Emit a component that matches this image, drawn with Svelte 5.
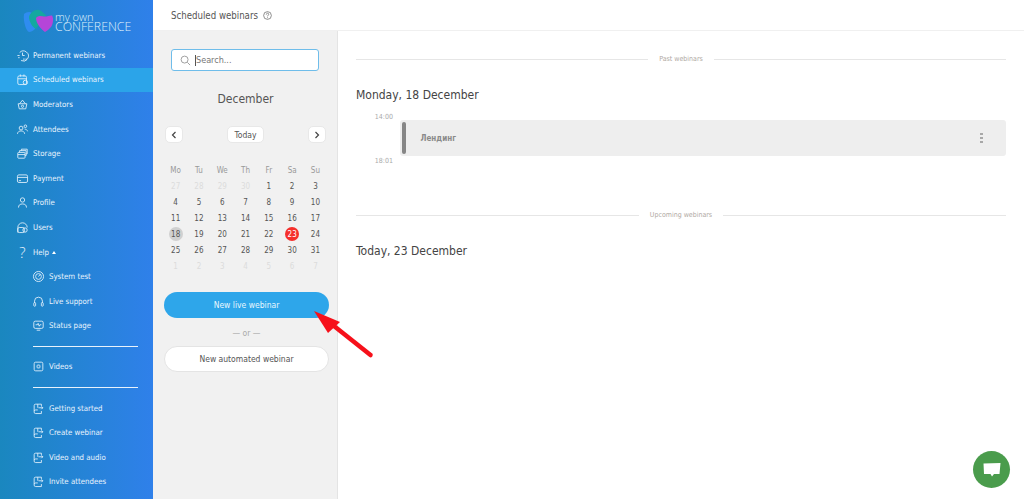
<script>
  const I = {
    perm: `<path d="M5 5a7 7 0 1 1 2 11" /><path d="M9 5v4h3"/><path d="M2 9h3M3 12h2M11 13v3M14 13v3"/>`,
    sched: `<rect x="2.5" y="4" width="12" height="12" rx="2"/><path d="M2.5 8h12M6 2v3M11 2v3"/><circle cx="13" cy="13" r="3"/>`,
    mod: `<path d="M3 8h12l-1.5 7h-9z"/><path d="M5 8l4-5 4 5"/><circle cx="9" cy="11.5" r="1.5"/>`,
    att: `<circle cx="7" cy="7" r="2.6"/><path d="M2 15c.5-3 2.5-4 5-4s4.500 1 5 4"/><circle cx="13" cy="4.500" r="1.800"/><path d="M12 8.500c2 0 3.500 1 4 3"/>`,
    stor: `<rect x="2.500" y="7.500" width="10" height="8" rx="1"/><path d="M5 7V5h9v7h-1.500M7.500 5V3h8v6.500H14M2.500 10.500h10"/>`,
    pay: `<rect x="2" y="4" width="14" height="10.500" rx="2"/><path d="M2 7.500h14M4 12h3"/>`,
    prof: `<circle cx="9" cy="5.500" r="3"/><path d="M3.500 16c0-3.500 2-5 5.500-5s5.500 1.500 5.500 5"/>`,
    users: `<path d="M2.500 16V9a6.500 6.500 0 0 1 13 0"/><rect x="2.500" y="9" width="9" height="7" rx="2"/><circle cx="12.500" cy="12.500" r="3"/>`,
    sys: `<circle cx="9" cy="9" r="7"/><circle cx="9" cy="9" r="4"/><path d="M9 9l2.500-3"/>`,
    live: `<path d="M3.500 11V8.500a5.500 5.500 0 0 1 11 0V11"/><rect x="2.500" y="10.500" width="2.500" height="5" rx="1"/><rect x="13" y="10.500" width="2.500" height="5" rx="1"/>`,
    stat: `<rect x="2.500" y="3" width="13" height="10" rx="2"/><path d="M5 8h2.500l1-2 1.500 4 1-2h2M6.500 15.500h5"/>`,
    vid: `<rect x="3" y="3" width="12" height="12" rx="2"/><rect x="7" y="7" width="4" height="4" rx="1"/>`,
    book: `<path d="M13 5.500V3H5a2 2 0 0 0-2 2v9a2 2 0 0 0 2 2h8v-3.500"/><path d="M3 12.500a2 2 0 0 1 2-1.500h3M8 3v5M9 8h6M13 6l2 2-2 2"/>`
  };
  const top = [
    ['Permanent webinars', 'perm'], ['Scheduled webinars', 'sched', true], ['Moderators', 'mod'],
    ['Attendees', 'att'], ['Storage', 'stor'], ['Payment', 'pay'], ['Profile', 'prof'], ['Users', 'users']
  ];
  const help = [['System test', 'sys'], ['Live support', 'live'], ['Status page', 'stat']];
  const guides = ['Getting started', 'Create webinar', 'Video and audio', 'Invite attendees'];
  const dows = ['Mo', 'Tu', 'We', 'Th', 'Fr', 'Sa', 'Su'];
  const days = [
    ...[27, 28, 29, 30].map((d) => ({ d, off: true })),
    ...Array.from({ length: 31 }, (_, i) => ({ d: i + 1, off: false })),
    ...[1, 2, 3, 4, 5, 6, 7].map((d) => ({ d, off: true }))
  ];
</script>

<div class="page">
  <aside class="side">
    <div class="logo">
      <svg width="31" height="24" viewBox="0 0 31 24">
        <path d="M1 5c2-2 6-3 8-1l4 2-1 14c-2 2-4 3-6 3C3 22 0 12 1 5z" fill="#2f8cf0"/>
        <path d="M6 8c1-4 6-8 10-7 3 1 5 4 7 5L13 20C9 18 6 12 6 8z" fill="#14a8a0"/>
        <path d="M13 9c2-3 6-2 8-1.500 3 .5 6-1.500 8-1 2 3 1 9-1 11.500-2 2-4 4-6 5-3-2-9-8-9-14z" fill="#b545d8"/>
      </svg>
      <div class="logotext"><span class="l1">my own</span><span class="l2">CONFERENCE</span></div>
    </div>
    <nav class="nav">
      {#each top as [label, ic, active]}
        <div class="row" class:active>
          <svg class="ic" viewBox="0 0 18 18">{@html I[ic]}</svg><span>{label}</span>
        </div>
      {/each}
      <div class="row">
        <span class="q">?</span><span>Help</span><i class="caret"></i>
      </div>
      {#each help as [label, ic]}
        <div class="row sub"><svg class="ic" viewBox="0 0 18 18">{@html I[ic]}</svg><span>{label}</span></div>
      {/each}
      <hr />
      <div class="row sub"><svg class="ic" viewBox="0 0 18 18">{@html I.vid}</svg><span>Videos</span></div>
      <hr />
      {#each guides as label}
        <div class="row sub"><svg class="ic" viewBox="0 0 18 18">{@html I.book}</svg><span>{label}</span></div>
      {/each}
    </nav>
  </aside>

  <div class="right">
    <header class="head">
      <span>Scheduled webinars</span>
      <svg class="help" width="9" height="9" viewBox="0 0 10 10"><circle cx="5" cy="5" r="4.300"/><path d="M3.600 4c0-2 2.800-2 2.800-.300 0 1-1.400 1-1.400 2.300M5 7v1"/></svg>
    </header>
    <div class="body">
      <section class="panel">
        <div class="search">
          <svg width="11" height="11" viewBox="0 0 12 12"><circle cx="5" cy="5" r="3.800"/><path d="M8 8l3 3"/></svg>
          <span class="caretbar"></span><span class="ph">Search...</span>
        </div>
        <h2 class="month">December</h2>
        <div class="calnav">
          <button class="nb"><svg width="6" height="8" viewBox="0 0 6 8"><path d="M4.500 1L1.500 4l3 3"/></svg></button>
          <button class="today">Today</button>
          <button class="nb"><svg width="6" height="8" viewBox="0 0 6 8"><path d="M1.500 1l3 3-3 3"/></svg></button>
        </div>
        <div class="cal">
          {#each dows as d}<div class="dow">{d}</div>{/each}
          {#each days as x}
            <div class="day" class:off={x.off}>
              <span class:past={!x.off && x.d === 18} class:now={!x.off && x.d === 23}>{x.d}</span>
            </div>
          {/each}
        </div>
        <button class="btn live">New live webinar</button>
        <div class="or">— or —</div>
        <button class="btn auto">New automated webinar</button>
      </section>

      <main class="main">
        <div class="sep first"><span>Past webinars</span></div>
        <h3 class="date">Monday, 18 December</h3>
        <div class="timeline">
          <div class="times"><span>14:00</span><span>18:01</span></div>
          <div class="event">
            <i class="bar"></i><b>Лендинг</b>
            <span class="dots"><i></i><i></i><i></i></span>
          </div>
        </div>
        <div class="sep second"><span>Upcoming webinars</span></div>
        <h3 class="date today-h">Today, 23 December</h3>
      </main>
    </div>
  </div>

  <svg class="arrow" width="70" height="58" viewBox="0 0 70 58">
    <path d="M56.500 45L20 16" stroke="#f6101a" stroke-width="4.500" stroke-linecap="round"/>
    <path d="M0 1L26 12 14 23z" fill="#f6101a"/>
  </svg>
  <div class="chat">
    <svg width="18" height="15" viewBox="0 0 18 15"><path d="M0.500 1.500L17.500 1 16.500 12H11l-2 2.500L7.500 12H1z" fill="#fff"/></svg>
  </div>
</div>

<style>
  :global(body) { margin: 0; background: #fff; }
  .page {
    position: relative; display: flex; width: 1024px; height: 499px; overflow: hidden;
    font-family: "DejaVu Sans", sans-serif; font-stretch: condensed; color: #444;
  }
  .side {
    width: 153px; flex: none; color: #eaf4fd;
    background: linear-gradient(90deg, #1a87bf, #2f80ea);
    font-size: 7.800px;
  }
  .logo { height: 43px; box-sizing: border-box; padding: 9px 0 0 23px; display: flex; gap: 1px; }
  .logotext { display: flex; flex-direction: column; margin-top: 2.500px; color: #dfeefa; font-family: "Open Sans", sans-serif; font-stretch: normal; font-weight: 300; }
  .l1 { font-size: 11px; line-height: 10px; }
  .l2 { font-size: 12.300px; line-height: 10px; }
  .row { height: 24.600px; display: flex; align-items: center; padding-left: 16px; gap: 4px; box-sizing: border-box; white-space: nowrap; }
  .row.active { background: #2ba4e9; }
  .row.sub { padding-left: 32px; gap: 4px; }
  .ic { width: 13px; height: 13px; fill: none; stroke: #e4f1fc; stroke-width: 1.200; flex: none; }
  .q { width: 13px; font-size: 15px; font-family: "Open Sans", sans-serif; font-stretch: normal; font-weight: 300; text-align: center; line-height: 1; }
  .caret { width: 0; height: 0; border: 2px solid transparent; border-bottom: 3px solid #fff; border-top: 0; margin-left: -1px; }
  hr { border: 0; height: 1px; background: #e8f2fc; margin: 8px 15px 7.500px 33px; }
  .right { flex: 1; display: flex; flex-direction: column; min-width: 0; }
  .head { height: 30px; flex: none; display: flex; align-items: center; gap: 5px; padding-left: 18px; font-size: 9.600px; color: #555; }
  .help { fill: none; stroke: #666; stroke-width: 0.800; }
  .body { flex: 1; display: flex; min-height: 0; border-top: 1px solid #f0f0f0; box-sizing: border-box; }
  .panel { flex: none; background: #f1f1f1; border-right: 1px solid #e4e4e4; padding: 18px 8px 0 11px; box-sizing: content-box; width: 165px; }
  .search { margin: 0 10px 0 7px; height: 22px; box-sizing: border-box; background: #fff; border: 1px solid #6fbdea; border-radius: 3px; display: flex; align-items: center; padding-left: 8px; font-size: 9px; color: #777; }
  .search svg { fill: none; stroke: #999; stroke-width: 1; margin-right: 4px; }
  .caretbar { width: 1px; height: 11px; background: #555; }
  .month { margin: 20px 0 0; height: 16px; line-height: 16px; font-size: 12px; font-weight: 400; text-align: center; color: #555; padding-right: 2px; }
  .calnav { display: flex; justify-content: space-between; align-items: center; margin: 19px 3px 0 1px; }
  button { font-family: inherit; font-stretch: inherit; cursor: pointer; }
  .nb, .today { height: 17px; background: #fff; border: 1px solid #e8e8e8; border-radius: 5px; padding: 0; display: flex; align-items: center; justify-content: center; color: #555; }
  .nb { width: 18px; }
  .nb svg { fill: none; stroke: #444; stroke-width: 1.200; }
  .today { width: 37px; font-size: 8.500px; }
  .cal { display: grid; grid-template-columns: repeat(7, 23.300px); grid-auto-rows: 16px; margin-top: 19px; font-size: 8px; }
  .dow { display: flex; align-items: center; justify-content: center; color: #999; }
  .day { display: flex; align-items: center; justify-content: center; color: #555; }
  .day span { width: 14px; height: 14px; border-radius: 50%; display: flex; align-items: center; justify-content: center; }
  .day.off { color: #dcdcdc; }
  .past { background: #d0d0d0; }
  .now { background: #f5302c; color: #fff; }
  .btn { display: block; width: 165px; height: 26px; border-radius: 13px; font-size: 8.500px; padding: 0; }
  .live { margin-top: 18px; background: #2ea6ea; border: 0; color: #e8f6fe; }
  .auto { background: #fff; border: 1px solid #e4e4e4; color: #555; }
  .or { text-align: center; height: 28px; line-height: 30px; font-size: 8.500px; color: #aaa; }
  .main { flex: 1; padding: 0 18px; min-width: 0; }
  .sep { display: flex; align-items: center; gap: 11px; font-size: 7px; color: #b0a9a3; height: 10px; }
  .sep::before, .sep::after { content: ""; flex: 1; height: 1px; background: #e6e6e6; }
  .first { margin-top: 23px; }
  .second { margin-top: 44.500px; }
  .date { margin: 0; font-size: 12px; font-weight: 400; line-height: 16px; color: #444; }
  .first + .date { margin-top: 23px; }
  .today-h { margin-top: 23px; }
  .timeline { display: flex; margin-top: 9.500px; height: 53px; }
  .times { width: 37px; flex: none; display: flex; flex-direction: column; justify-content: space-between; align-items: flex-end; font-size: 7px; color: #aaa; height: 53px; line-height: 9px; }
  .event { margin: 7.500px 0 0 7px; flex: 1; height: 36px; background: #eee; border-radius: 3px; display: flex; align-items: center; padding-left: 2px; box-sizing: border-box; }
  .bar { width: 3.500px; height: 32px; background: #868686; border-radius: 2px; flex: none; }
  .event b { margin-left: 15px; font-size: 8px; color: #8a8a8a; font-weight: 700; }
  .dots { margin-left: auto; margin-right: 23px; display: flex; flex-direction: column; gap: 1.500px; }
  .dots i { width: 3px; height: 2.500px; background: #a8a8a8; }
  .arrow { position: absolute; left: 314px; top: 310px; }
  .chat { position: absolute; left: 973px; top: 451px; width: 37px; height: 37px; border-radius: 50%; background: #4a9c4c; display: flex; align-items: center; justify-content: center; }
</style>
